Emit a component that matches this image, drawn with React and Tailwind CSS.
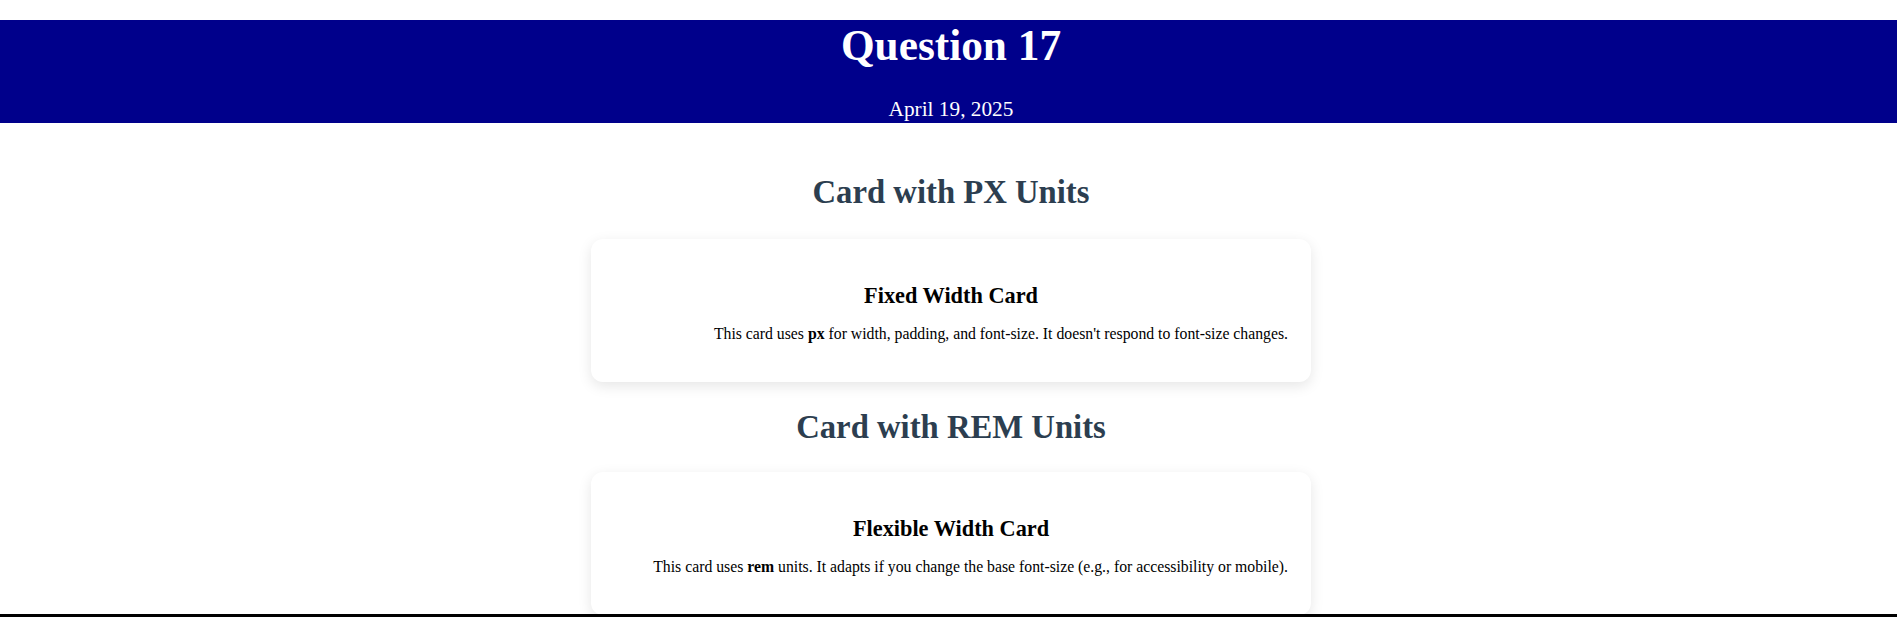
// Question 17 — px vs rem cards
const CARDS = [
  {
    heading: "Card with PX Units",
    title: "Fixed Width Card",
    before: "This card uses ",
    unit: "px",
    after: " for width, padding, and font-size. It doesn't respond to font-size changes.",
    gap: "mt-[51px] mb-[28px]",
  },
  {
    heading: "Card with REM Units",
    title: "Flexible Width Card",
    before: "This card uses ",
    unit: "rem",
    after: " units. It adapts if you change the base font-size (e.g., for accessibility or mobile).",
    gap: "mt-[27px] mb-[26px]",
  },
];

const Card = ({ card }) => (
  <section className="flex flex-col items-center pl-[5px]">
    <h2 className={`${card.gap} text-[32.7px] leading-[37px] font-bold text-[#2c3e50]`}>
      {card.heading}
    </h2>
    <div className="w-[720px] shrink-0 bg-white rounded-xl shadow-[0_4px_14px_rgba(0,0,0,0.1)] pt-[44px] pb-[39px] pr-[23px]">
      <h3 className="text-center text-[22.3px] leading-[26px] font-bold text-black pl-[23px]">
        {card.title}
      </h3>
      <p className="mt-4 text-right text-[15.75px] leading-[18px] text-black">
        {card.before}
        <strong className="font-bold">{card.unit}</strong>
        {card.after}
      </p>
    </div>
  </section>
);

export default function App() {
  return (
    <div className="h-[617px] flex flex-col bg-white font-['Liberation_Serif','Times_New_Roman',serif] overflow-hidden">
      <div className="flex-1 min-h-0 overflow-hidden pt-5">
        {/* header */}
        <header className="h-[103px] bg-[#00008b] flex flex-col items-center pl-[5px] text-white">
          <h1 className="text-[43.3px] leading-[51px] font-bold">Question 17</h1>
          <p className="mt-[26px] text-[21.3px] leading-[24px]">April 19, 2025</p>
        </header>

        {CARDS.map((card) => (
          <Card key={card.unit} card={card} />
        ))}
      </div>
      <div className="h-[3px] bg-black shrink-0" />
    </div>
  );
}
